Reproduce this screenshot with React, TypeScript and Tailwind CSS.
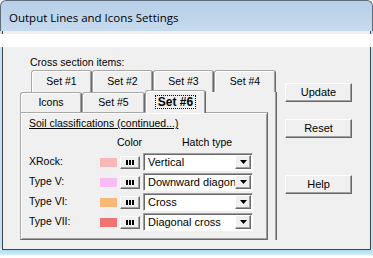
import React from "react";

const ui = "font-['Liberation_Sans',Arial,sans-serif]";

const raised =
  "border border-t-white border-l-white border-r-[#696969] border-b-[#696969] shadow-[inset_-1px_-1px_0_#a0a0a0] bg-[#f0f0f0]";

type Row = { label: string; swatch: string; hatch: string };

const rows: Row[] = [
  { label: "XRock:", swatch: "bg-[#f8b8b8]", hatch: "Vertical" },
  { label: "Type V:", swatch: "bg-[#f9bcf7]", hatch: "Downward diagonal" },
  { label: "Type VI:", swatch: "bg-[#f8b878]", hatch: "Cross" },
  { label: "Type VII:", swatch: "bg-[#f07474]", hatch: "Diagonal cross" },
];

const Frame = ({ className, children }: { className: string; children?: React.ReactNode }) => (
  <div className={`flex ${className}`}>
    <div className="w-[2px] bg-[#c6e2f1]" />
    <div className="flex-1 border-x border-[#3d4650] bg-[#f0f0f0]">{children}</div>
    <div className="w-[2px] bg-[#c6e2f1]" />
  </div>
);

const Tab = ({ label, width }: { label: string; width: string }) => (
  <div
    className={`${width} h-full flex items-center justify-center rounded-t-[3px] border-t border-l border-r border-t-[#a8a8a8] border-l-[#a8a8a8] border-r-[#696969] shadow-[inset_1px_1px_0_#fff,inset_-1px_0_0_#a0a0a0] bg-[#f0f0f0]`}
  >
    {label}
  </div>
);

const Dots = () => (
  <svg width="8" height="5" viewBox="0 0 8 5">
    <rect x="0" y="0" width="2" height="5" fill="#000" />
    <rect x="3" y="0" width="2" height="5" fill="#000" />
    <rect x="6" y="0" width="2" height="5" fill="#000" />
  </svg>
);

const Combo = ({ value }: { value: string }) => (
  <div className="ml-[3px] w-[110px] h-[18px] flex border border-t-[#a0a0a0] border-l-[#a0a0a0] border-r-white border-b-white shadow-[inset_1px_1px_0_#696969] bg-white p-[1px]">
    <div className="flex-1 overflow-hidden whitespace-nowrap pl-[3px] leading-[14px] text-[11px]">{value}</div>
    <div className={`w-[16px] h-full flex items-center justify-center ${raised}`}>
      <svg width="7" height="4" viewBox="0 0 7 4">
        <path d="M0 0h7L3.5 4z" fill="#000" />
      </svg>
    </div>
  </div>
);

const Button = ({ label, className }: { label: string; className: string }) => (
  <div className={`w-[67px] h-[19px] flex items-center justify-center text-[11px] ${raised} ${className}`}>
    {label}
  </div>
);

export default function App() {
  return (
    <div className={`w-[373px] h-[258px] bg-white overflow-hidden text-black text-[10.5px] ${ui}`}>
      <div className="h-[31px] rounded-t-[6px] border border-b-0 border-[#5d6b7a] bg-linear-to-b from-[#b7cfe8] to-[#c6daee] flex items-center pl-[8px] pt-[3px] font-['Open_Sans',sans-serif] text-[11.5px]">
        Output Lines and Icons Settings
      </div>
      <Frame className="h-[3px]" />
      <div className="h-[13px] bg-white" />
      <Frame className="h-[202px]">
        <div className="flex">
          <div className="w-[274px] pl-[17px] pt-[9px]">
            <div className="ml-[10px] leading-[12px]">Cross section items:</div>
            <div className="mt-[2px] w-[257px]">
              <div className="ml-[11px] flex h-[22px]">
                <Tab label="Set #1" width="w-[61px]" />
                <Tab label="Set #2" width="w-[61px]" />
                <Tab label="Set #3" width="w-[61px]" />
                <Tab label="Set #4" width="w-[62px]" />
              </div>
              <div className="ml-[11px] w-[246px] border-r border-[#696969] shadow-[inset_-1px_0_0_#a0a0a0]">
                <div className="-ml-[11px] w-[248px]">
                  <div className="relative z-10 flex items-end h-[20px]">
                    <Tab label="Icons" width="w-[62px]" />
                    <Tab label="Set #5" width="w-[63px]" />
                    <div className="w-[61px] h-[23px] -mb-[1px] flex items-center justify-center rounded-t-[3px] border-t border-l border-r border-t-[#a8a8a8] border-l-[#a8a8a8] border-r-[#696969] shadow-[inset_1px_1px_0_#fff,inset_-1px_0_0_#a0a0a0] bg-[#f0f0f0]">
                      <span className="font-bold text-[12px] leading-[12px] border border-dotted border-black px-[2px] py-[0px]">
                        Set #6
                      </span>
                    </div>
                  </div>
                  <div className="h-[128px] border border-t-[#a8a8a8] border-l-[#a8a8a8] border-r-[#696969] border-b-[#696969] shadow-[inset_1px_1px_0_#fff,inset_-1px_-1px_0_#a0a0a0] pl-[8px] pt-[4px]">
                    <div className="underline leading-[12px]">Soil classifications (continued...)</div>
                    <div className="mt-[7px] flex leading-[12px]">
                      <span className="ml-[88px] w-[65px]">Color</span>
                      <span>Hatch type</span>
                    </div>
                    <div className="mt-[5px] flex flex-col gap-[2px]">
                      {rows.map((r) => (
                        <div key={r.label} className="flex items-center h-[18px]">
                          <div className="w-[71px]">{r.label}</div>
                          <div className={`w-[17px] h-[9px] ${r.swatch}`} />
                          <div className={`ml-[3px] w-[20px] h-[13px] flex items-center justify-center ${raised}`}>
                            <Dots />
                          </div>
                          <Combo value={r.hatch} />
                        </div>
                      ))}
                    </div>
                  </div>
                </div>
              </div>
            </div>
          </div>
          <div className="pl-[8px] pt-[36px]">
            <Button label="Update" className="" />
            <Button label="Reset" className="mt-[17px]" />
            <Button label="Help" className="mt-[37px]" />
          </div>
        </div>
      </Frame>
      <div className="mx-[2px] h-[1px] bg-[#3d4650]" />
      <div className="h-[5px] bg-linear-to-b from-[#a9dcef] to-[#d4eef8]" />
    </div>
  );
}
